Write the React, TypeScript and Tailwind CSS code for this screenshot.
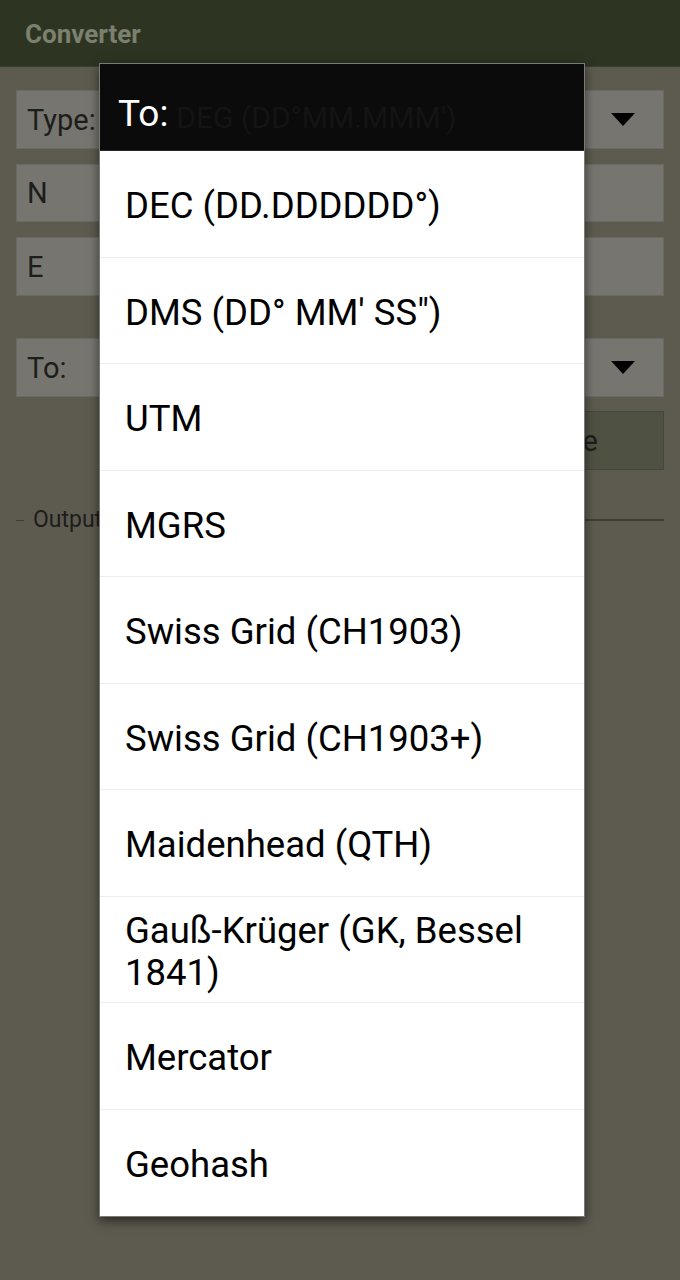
import React from "react";

const items = [
  "DEC (DD.DDDDDD°)",
  "DMS (DD° MM' SS\")",
  "UTM",
  "MGRS",
  "Swiss Grid (CH1903)",
  "Swiss Grid (CH1903+)",
  "Maidenhead (QTH)",
  "Gauß-Krüger (GK, Bessel 1841)",
  "Mercator",
  "Geohash",
];

function Caret() {
  return (
    <svg width="24" height="13" viewBox="0 0 24 13" className="shrink-0">
      <path d="M0 0 L24 0 L12 13 Z" fill="#000" />
    </svg>
  );
}

export default function App() {
  return (
    <div
      className="relative w-[680px] h-[1280px] overflow-hidden bg-[#5d5b4f]"
      style={{ fontFamily: "Roboto, 'Noto Sans', sans-serif" }}
    >
      {/* toolbar */}
      <div className="h-[67px] bg-[#2d3421] flex items-center pl-[25px] border-b border-[#3a4030]">
        <span className="text-[26px] font-bold text-[#7c806f] mt-[3px]">Converter</span>
      </div>

      {/* form */}
      <div className="px-[16px] pt-[23px] flex flex-col">
        <div className="h-[59px] bg-[#76756f] border border-[#6a6962] flex items-center pl-[10px] pr-[28px]">
          <span className="text-[29px] text-[#1d1d1b] mt-[2px]">Type:</span>
          <span className="flex-1" />
          <Caret />
        </div>
        <div className="mt-[15px] h-[58px] bg-[#76756f] border border-[#6a6962] flex items-center pl-[10px]">
          <span className="text-[29px] text-[#1d1d1b] mt-[2px]">N</span>
        </div>
        <div className="mt-[15px] h-[59px] bg-[#76756f] border border-[#6a6962] flex items-center pl-[10px]">
          <span className="text-[29px] text-[#1d1d1b] mt-[2px]">E</span>
        </div>
        <div className="mt-[42px] h-[59px] bg-[#76756f] border border-[#6a6962] flex items-center pl-[10px] pr-[28px]">
          <span className="text-[29px] text-[#1d1d1b] mt-[2px]">To:</span>
          <span className="flex-1" />
          <Caret />
        </div>
        <div className="mt-[14px] flex justify-end">
          <div className="w-[320px] h-[59px] bg-[#4f5243] border border-[#45483a] flex items-center justify-end pr-[65px]">
            <span className="text-[29px] text-[#1d1d1b] mt-[2px]">Calculate</span>
          </div>
        </div>
        <div className="mt-[33px] flex items-center">
          <div className="w-[8px] h-px bg-[#3f3e36]" />
          <span className="ml-[9px] mr-[6px] text-[23px] text-[#1d1d1b]">Output</span>
          <div className="flex-1 h-[2px] bg-[#3f3e36]" />
        </div>
      </div>

      {/* dialog */}
      <div className="absolute left-[99px] top-[63px] w-[486px] border border-[#7a7a78] bg-white shadow-[0_4px_10px_rgba(0,0,0,0.55)]">
        <div className="h-[87px] bg-[#0b0b0b] border-b border-[#2a2a2a] flex items-center pl-[18px]">
          <span className="text-[37px] text-white leading-none mt-[12px]">To:</span>
          <span className="ml-[8px] text-[30px] text-[#141414] leading-none mt-[22px]">DEG (DD°MM.MMM')</span>
        </div>
        {items.map((t, i) => (
          <div
            key={t}
            className={`h-[106.5px] flex items-center pl-[25px] pr-[30px] ${i < items.length - 1 ? "border-b border-[#eeeeee]" : ""}`}
          >
            <span className="text-[36.5px] leading-[42px] text-black mt-[5px]">{t}</span>
          </div>
        ))}
      </div>
    </div>
  );
}
